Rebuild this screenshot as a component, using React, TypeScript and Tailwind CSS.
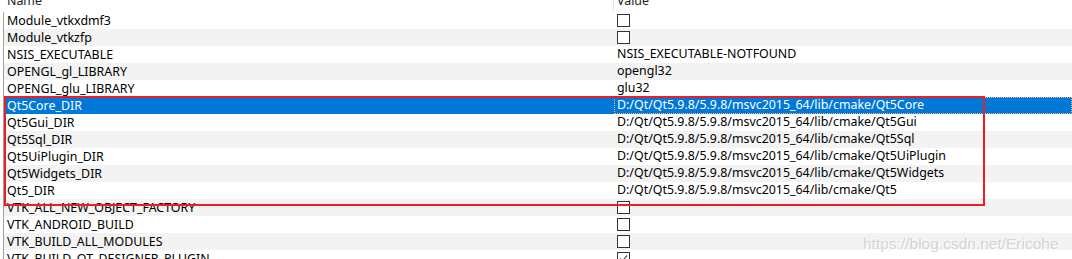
const rows: { name: string; value: string; check?: "off" | "on" }[] = [
  { name: "Module_vtkxdmf3", value: "", check: "off" },
  { name: "Module_vtkzfp", value: "", check: "off" },
  { name: "NSIS_EXECUTABLE", value: "NSIS_EXECUTABLE-NOTFOUND" },
  { name: "OPENGL_gl_LIBRARY", value: "opengl32" },
  { name: "OPENGL_glu_LIBRARY", value: "glu32" },
  { name: "Qt5Core_DIR", value: "D:/Qt/Qt5.9.8/5.9.8/msvc2015_64/lib/cmake/Qt5Core" },
  { name: "Qt5Gui_DIR", value: "D:/Qt/Qt5.9.8/5.9.8/msvc2015_64/lib/cmake/Qt5Gui" },
  { name: "Qt5Sql_DIR", value: "D:/Qt/Qt5.9.8/5.9.8/msvc2015_64/lib/cmake/Qt5Sql" },
  { name: "Qt5UiPlugin_DIR", value: "D:/Qt/Qt5.9.8/5.9.8/msvc2015_64/lib/cmake/Qt5UiPlugin" },
  { name: "Qt5Widgets_DIR", value: "D:/Qt/Qt5.9.8/5.9.8/msvc2015_64/lib/cmake/Qt5Widgets" },
  { name: "Qt5_DIR", value: "D:/Qt/Qt5.9.8/5.9.8/msvc2015_64/lib/cmake/Qt5" },
  { name: "VTK_ALL_NEW_OBJECT_FACTORY", value: "", check: "off" },
  { name: "VTK_ANDROID_BUILD", value: "", check: "off" },
  { name: "VTK_BUILD_ALL_MODULES", value: "", check: "off" },
  { name: "VTK_BUILD_QT_DESIGNER_PLUGIN", value: "", check: "on" },
];

function CheckBox({ on }: { on?: boolean }) {
  return (
    <div className="w-[13px] h-[13px] border border-[#333333] bg-white flex items-center justify-center">
      {on && (
        <svg width="9" height="9" viewBox="0 0 9 9">
          <path d="M1 4.5 L3.5 7 L8 1.5" fill="none" stroke="#555" strokeWidth="1.2" />
        </svg>
      )}
    </div>
  );
}

export default function App() {
  return (
    <div
      className="relative w-[1072px] h-[259px] overflow-hidden bg-white text-[12.4px] text-black"
      style={{ fontFamily: '"Noto Sans", "Open Sans", sans-serif' }}
    >
      {/* header */}
      <div className="flex h-[11px] overflow-hidden">
        <div className="w-[613px] pl-[7px] -mt-[8px] leading-[17px] text-[#222]">Name</div>
        <div className="border-l border-[#e5e5e5] pl-[3px] -mt-[8px] leading-[17px] text-[#222]">Value</div>
      </div>
      <div className="h-px" />
      <div className="border-l border-[#a0a0a0] ml-[3px]">
        {rows.map((r, i) => {
          const sel = r.name === "Qt5Core_DIR";
          const bg = sel ? "bg-[#0078d7] text-white" : i % 2 === 1 ? "bg-[#f3f3f3]" : "bg-white";
          return (
            <div key={r.name} className={`flex h-[17px] items-center ${bg}`}>
              <div className="w-[610px] pl-[3px] whitespace-nowrap leading-[17px]">{r.name}</div>
              <div
                className={`flex-1 h-full flex items-center pl-[3px] whitespace-nowrap ${
                  sel ? "outline outline-1 outline-dotted outline-[#ffb080] -outline-offset-1" : ""
                }`}
              >
                {r.check ? <CheckBox on={r.check === "on"} /> : r.value}
              </div>
            </div>
          );
        })}
      </div>

      {/* red annotation box */}
      <div className="absolute left-[4px] top-[96px] w-[981px] h-[110px] border-2 border-[#ee1c25] pointer-events-none" />

      {/* watermark */}
      <div
        className="absolute left-[863px] top-[232px] text-[15.5px] text-[#d4d4d4] whitespace-nowrap"
        style={{ fontFamily: '"Liberation Sans", Arial, sans-serif', textShadow: "1px 1px 0 #ffffff" }}
      >
        https://blog.csdn.net/Ericohe
      </div>
    </div>
  );
}
